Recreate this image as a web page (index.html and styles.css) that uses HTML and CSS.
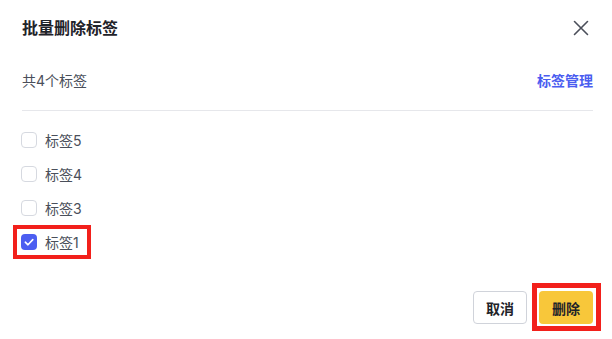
FILE: index.html
```html
<!DOCTYPE html>
<html lang="zh">
<head>
<meta charset="utf-8">
<link rel="stylesheet" href="styles.css">
</head>
<body>
<div class="dialog">
  <div class="header">
    <div class="title">批量删除标签</div>
    <span class="close" aria-label="关闭">
      <svg width="16" height="16" viewBox="0 0 16 16"><path d="M1.5 1.5 L14.5 14.5 M14.5 1.5 L1.5 14.5" stroke="#4b4f5a" stroke-width="1.6" fill="none" stroke-linecap="round"/></svg>
    </span>
  </div>
  <div class="summary">
    <span class="count">共4个标签</span>
    <a class="manage">标签管理</a>
  </div>
  <div class="divider"></div>
  <div class="list">
    <label class="item"><span class="box"></span><span class="label">标签5</span></label>
    <label class="item"><span class="box"></span><span class="label">标签4</span></label>
    <label class="item"><span class="box"></span><span class="label">标签3</span></label>
    <label class="item item-marked"><span class="box box-checked"><svg width="16" height="16" viewBox="0 0 16 16"><path d="M4.3 8.2 L7 10.8 L11.8 5.6" stroke="#fff" stroke-width="1.6" fill="none" stroke-linecap="round" stroke-linejoin="round"/></svg></span><span class="label">标签1</span></label>
  </div>
  <div class="footer">
    <button class="btn btn-cancel">取消</button>
    <button class="btn btn-delete">删除</button>
  </div>
</div>
</body>
</html>
```
FILE: styles.css
```css
* { box-sizing: border-box; }
html, body { margin: 0; padding: 0; background: #fff; }
body {
  width: 612px;
  height: 339px;
  overflow: hidden;
  font-family: Inter, "Noto Sans CJK SC", "Noto Sans", sans-serif;
  color: #4a4f5a;
}
.dialog {
  padding: 16px 19px 0 22px;
}
.header {
  display: flex;
  align-items: center;
  justify-content: space-between;
  height: 24px;
}
.title {
  font-size: 16px;
  font-weight: 700;
  color: #1f2329;
  line-height: 24px;
}
.close {
  display: flex;
  width: 16px;
  height: 16px;
  margin-right: 4px;
}
.summary {
  display: flex;
  justify-content: space-between;
  align-items: center;
  margin-top: 29px;
  height: 22px;
  font-size: 14px;
}
.count { color: #4a4f5a; }
.manage {
  color: #4a5df0;
  font-weight: 600;
}
.divider {
  margin-top: 19px;
  height: 1px;
  background: #e6e7eb;
}
.list {
  display: flex;
  flex-direction: column;
  align-items: flex-start;
  margin-top: 12px;
  margin-left: -9px;
}
.item {
  display: inline-flex;
  align-items: center;
  gap: 8px;
  height: 34px;
  padding: 0 12px 0 8px;
  font-size: 14px;
  color: #4a4f5a;
}
.item-marked {
  outline: 4px solid #f2201b;
  outline-offset: -4px;
}
.box {
  display: flex;
  width: 16px;
  height: 16px;
  border: 1px solid #d6d9e0;
  border-radius: 4px;
  background: #fff;
}
.box-checked {
  border: none;
  background: #4c5ef1;
}
.footer {
  display: flex;
  justify-content: flex-end;
  gap: 12px;
  margin-top: 32px;
}
.btn {
  height: 33px;
  width: 54px;
  padding: 0;
  border-radius: 4px;
  font-family: Inter, "Noto Sans CJK SC", "Noto Sans", sans-serif;
  font-size: 14px;
  font-weight: 600;
  color: #1f2329;
  cursor: pointer;
}
.btn-cancel {
  background: #fff;
  border: 1px solid #d0d3da;
}
.btn-delete {
  position: relative;
  background: #f8c73a;
  border: none;
}
.btn-delete::after {
  content: "";
  position: absolute;
  top: -8px;
  left: -7px;
  right: -8px;
  bottom: -7px;
  border: 5px solid #f2201b;
}
```
